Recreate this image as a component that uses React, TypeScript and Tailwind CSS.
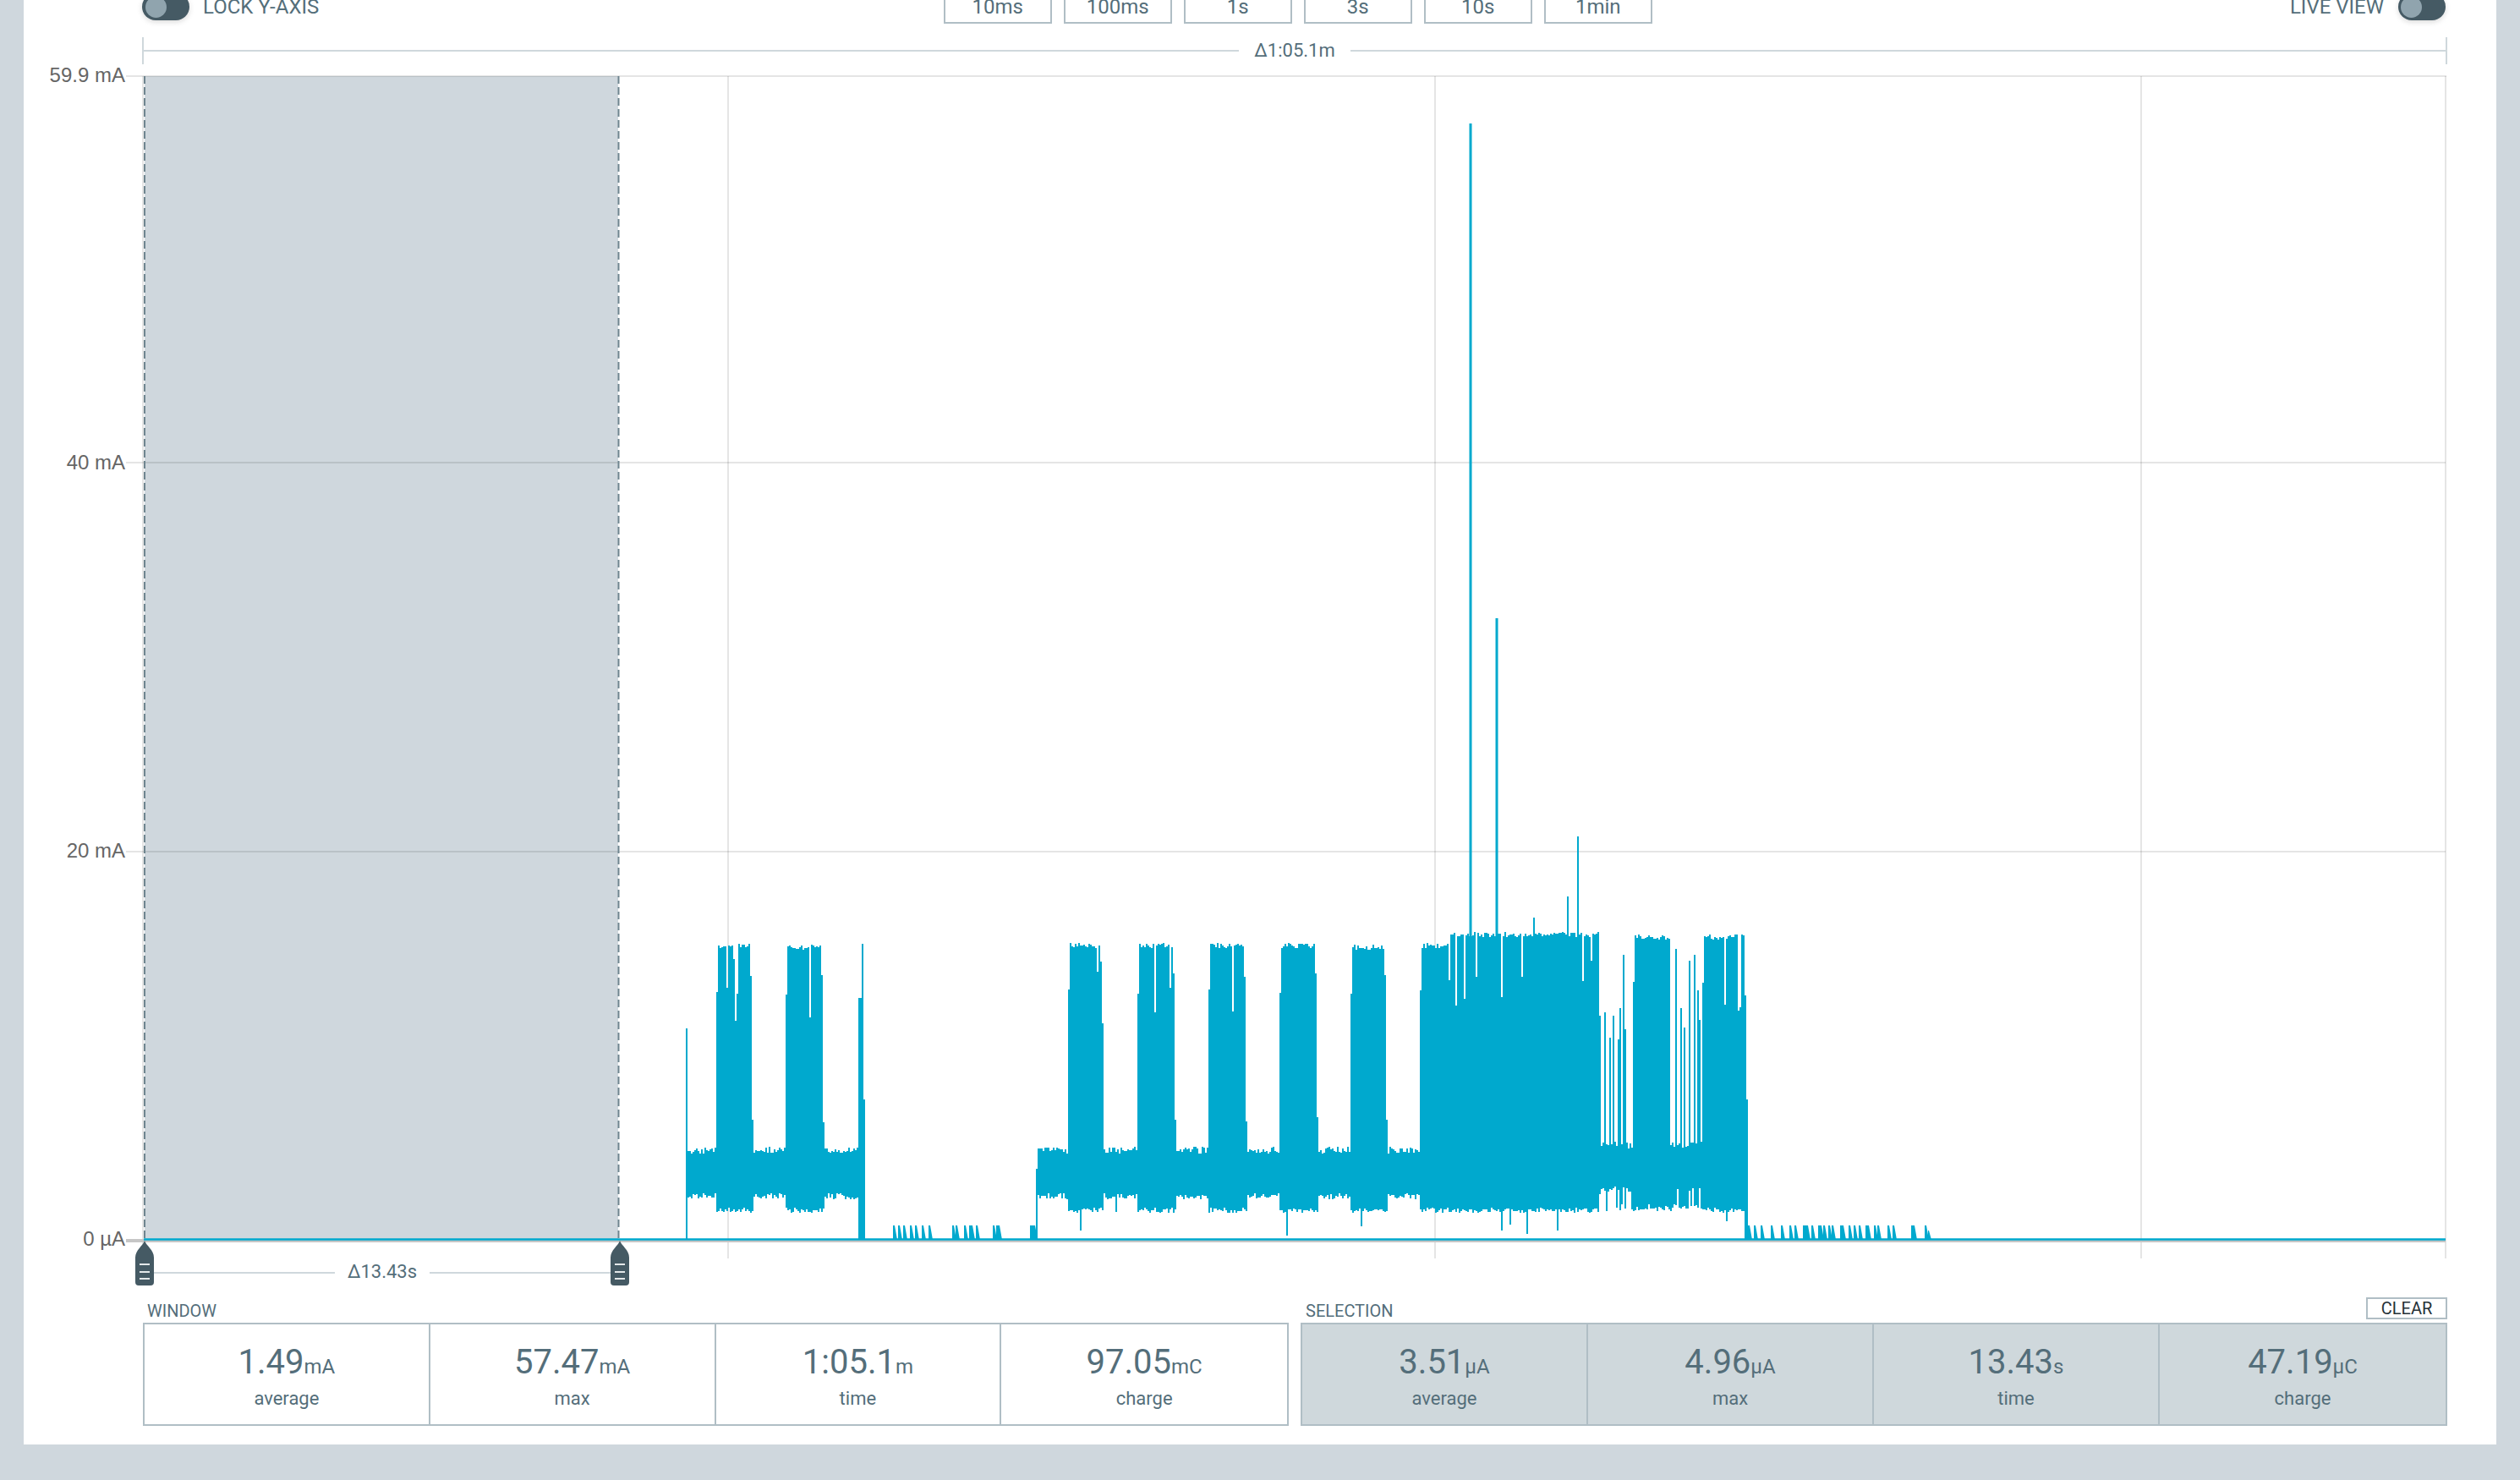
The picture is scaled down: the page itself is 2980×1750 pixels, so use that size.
const PLOT_L = 169
const PLOT_R = 2892
const PLOT_T = 90
const ZERO = 1466

// deterministic noise, so the trace is the same on every load
let seed = 7321
function rnd() {
  seed = (seed * 1664525 + 1013904223) % 4294967296
  return seed / 4294967296
}

const bursts: [number, number, number][] = [
  [847, 871, 1118], [871, 890, 1118], [929, 974, 1120],
  [1263, 1305, 1118], [1345, 1390, 1118], [1429, 1474, 1118],
  [1513, 1558, 1118], [1597, 1640, 1120],
  [1679, 1713, 1118], [1713, 1890, 1105],
  [1931, 1975, 1108], [2013, 2063, 1108],
]

const taper = [205, 90, 35, 18]

const topSpikes: Record<number, number> = {
  812: 1216, 1016: 1180, 1018: 1180, 1020: 1116,
  1226: 1382,
  1854: 1060, 1866: 989, 1814: 1085, 1892: 1201,
  1898: 1197, 1904: 1227, 1908: 1201, 1914: 1229, 1916: 1192, 1920: 1129, 1922: 1217,
  1982: 1122, 1988: 1192, 1992: 1215, 1998: 1136, 2004: 1129, 2008: 1171, 2010: 1206,
  2064: 1177,
}

const lowSpikes: Record<number, number> = {
  1278: 1455, 1320: 1433, 1522: 1461, 1610: 1450,
  1776: 1455, 1786: 1448, 1806: 1459, 1842: 1455, 2042: 1444,
}

function buildTrace() {
  let d = ""
  for (let x = 812; x <= 2066; x += 2) {
    if (x > 1022 && x < 1226) continue
    const late = x >= 1893
    let top = (late ? 1350 : 1356) + rnd() * 8
    let bot = (late ? 1402 : 1411) + rnd() * 7
    const b = bursts.find((k) => x >= k[0] && x <= k[1])
    if (b) {
      top = b[2] + rnd() * 6 - 3
      if (rnd() < 0.07) top += 25 + rnd() * 65
      if (x - b[0] < 2) top += 55
      if (b[1] < 1680 && b[1] - x < 4) top += taper[b[1] - x]
      bot = 1428 + rnd() * 6
    }
    if (x >= 1893 && x < 2013 && rnd() < 0.45) bot = 1424 + rnd() * 8
    if (topSpikes[x]) top = topSpikes[x]
    if (lowSpikes[x]) bot = lowSpikes[x]
    if (x === 812 || x === 1226 || x >= 2064 || (x >= 1016 && x <= 1022)) bot = ZERO
    if (x === 1022) top = 1300
    if (x === 2066) top = 1300
    d += `M${x} ${top.toFixed(0)}V${bot.toFixed(0)}`
  }
  return d
}

const ticks = [
  1056, 1062, 1068, 1076, 1082, 1090, 1098, 1126, 1130, 1140, 1146, 1148, 1154, 1174, 1178, 1180, 1218, 1220, 1222,
  2067, 2074, 2082, 2094, 2106, 2116, 2122, 2132, 2134, 2136, 2142, 2150, 2152, 2156, 2162, 2166, 2176, 2178, 2186,
  2192, 2198, 2206, 2208, 2216, 2220, 2232, 2238, 2260, 2262, 2276,
]

const tracePath = buildTrace()
const tickPath = ticks.map((x) => `M${x} 1466V1449h2l3 17Z`).join("") + "M2280 1466V1455h1l3 11Z"

function Handle({ x }: { x: number }) {
  return (
    <g transform={`translate(${x - 171} 0)`}>
      <path d="M171 1467C173 1473 182 1478 182 1487V1516Q182 1520 178 1520H164Q160 1520 160 1516V1487C160 1478 169 1473 171 1467Z" fill="#455a64" />
      <path d="M165 1495H177M165 1504H177M165 1512H177" stroke="#e4e8ea" strokeWidth="2" />
    </g>
  )
}

function Chart() {
  return (
    <svg viewBox="28 76 2924 1454" width="2924" height="1454" className="block [font-family:'Liberation_Sans',sans-serif]">
      <rect x="171" y={PLOT_T} width="560" height={ZERO - PLOT_T} fill="#cfd7dd" />
      <g stroke="#000" strokeOpacity="0.1" strokeWidth="2">
        <path d={`M149 ${PLOT_T}H${PLOT_R + 1}M149 547H${PLOT_R}M149 1007H${PLOT_R}`} />
        <path d={`M${PLOT_L} ${PLOT_T}V1488M861 ${PLOT_T}V1488M1697 ${PLOT_T}V1488M2532 ${PLOT_T}V1488M${PLOT_R} ${PLOT_T}V1488`} />
      </g>
      <path d={`M149 1467H${PLOT_R}`} stroke="#c6c6c6" strokeWidth="4" />
      <path d={`M171 ${PLOT_T}V1467M731.5 ${PLOT_T}V1467`} stroke="#6f858f" strokeWidth="2" strokeDasharray="9 4" />
      <path d={`M170 1465.5H${PLOT_R}`} stroke="#00a9ce" strokeWidth="2.5" />
      <path d={tracePath} stroke="#00a9ce" strokeWidth="2" fill="none" shapeRendering="crispEdges" />
      <path d="M1739 146V1110M1770 731V1110" stroke="#00a9ce" strokeWidth="3" />
      <path d={tickPath} fill="#00a9ce" />
      <g fontSize="24" fill="#666" textAnchor="end" dominantBaseline="middle">
        <text x="148" y={PLOT_T + 1}>59.9 mA</text>
        <text x="148" y="549">40 mA</text>
        <text x="148" y="1008">20 mA</text>
        <text x="148" y="1467">0 µA</text>
      </g>
      <path d="M182 1505H396M508 1505H722" stroke="#cfd8dc" strokeWidth="2" />
      <text x="452" y="1511" fontSize="22" fill="#546e7a" textAnchor="middle" className="[font-family:Roboto,sans-serif]">Δ13.43s</text>
      <Handle x={171} />
      <Handle x={733} />
    </svg>
  )
}

function Toggle({ knob }: { knob: string }) {
  return (
    <div className={`w-[56px] h-[32px] rounded-full bg-[#455a64] shadow-[0_2px_6px_rgba(0,0,0,0.15)] flex items-center ${knob}`}>
      <div className="w-[25px] h-[25px] rounded-full bg-[#90a4ae]" />
    </div>
  )
}

const ranges = ["10ms", "100ms", "1s", "3s", "10s", "1min"]

function Stat({ value, unit, label, last }: { value: string; unit: string; label: string; last: boolean }) {
  return (
    <div className={`flex flex-col items-center pt-[21px] ${last ? "" : "border-r-2 border-[#b0bec5]"}`}>
      <div className="flex items-baseline text-[#546e7a]">
        <span className="text-[40px] leading-[48px]">{value}</span>
        <span className="text-[24px] leading-[48px]">{unit}</span>
      </div>
      <div className="text-[22px] leading-[26px] mt-[1px] text-[#546e7a]">{label}</div>
    </div>
  )
}

type StatData = { value: string; unit: string; label: string }

const windowStats: StatData[] = [
  { value: "1.49", unit: "mA", label: "average" },
  { value: "57.47", unit: "mA", label: "max" },
  { value: "1:05.1", unit: "m", label: "time" },
  { value: "97.05", unit: "mC", label: "charge" },
]

const selectionStats: StatData[] = [
  { value: "3.51", unit: "µA", label: "average" },
  { value: "4.96", unit: "µA", label: "max" },
  { value: "13.43", unit: "s", label: "time" },
  { value: "47.19", unit: "µC", label: "charge" },
]

function StatGroup({ stats, shaded }: { stats: StatData[]; shaded: boolean }) {
  return (
    <div className={`h-[122px] border-2 border-[#b0bec5] grid grid-cols-4 ${shaded ? "bg-[#cfd8dc]" : "bg-white"}`}>
      {stats.map((s, i) => (
        <Stat key={s.label} {...s} last={i === 3} />
      ))}
    </div>
  )
}

export default function App() {
  return (
    <div className="w-[2980px] h-[1750px] bg-[#cfd7dd] overflow-hidden pl-[28px] [font-family:Roboto,sans-serif]">
      <div className="w-[2924px] h-[1720px] bg-white">
        <div className="-mt-[12px] h-[40px] flex items-center pl-[140px] pr-[60px] text-[24px] text-[#546e7a] relative">
          <div className="w-[948px] flex items-center gap-[16px]">
            <Toggle knob="pl-[4px]" />
            <span>LOCK Y-AXIS</span>
          </div>
          <div className="flex gap-[14.5px]">
            {ranges.map((r) => (
              <button key={r} className="w-[127.5px] h-[40px] border-2 border-[#b0bec5] text-[#546e7a]">
                {r}
              </button>
            ))}
          </div>
          <div className="ml-auto flex items-center gap-[17px]">
            <span>LIVE VIEW</span>
            <Toggle knob="pl-[3px]" />
          </div>
        </div>
        <div className="mt-[16px] ml-[140px] w-[2726px] h-[32px] border-x-2 border-[#cfd8dc] flex items-center">
          <div className="flex-1 h-[2px] bg-[#cfd8dc]" />
          <span className="px-[18px] text-[22px] leading-[28px] text-[#546e7a]">Δ1:05.1m</span>
          <div className="flex-1 h-[2px] bg-[#cfd8dc]" />
        </div>
        <Chart />
        <div className="flex gap-[14px] pl-[141px] pr-[58px]">
          <div className="w-[1355px]">
            <div className="h-[34px] pl-[5px] pt-[8px] text-[20px] leading-[24px] text-[#546e7a]">WINDOW</div>
            <StatGroup stats={windowStats} shaded={false} />
          </div>
          <div className="flex-1">
            <div className="h-[34px] pl-[6px] flex justify-between items-start">
              <span className="pt-[8px] text-[20px] leading-[24px] text-[#546e7a]">SELECTION</span>
              <button className="mt-[4px] w-[96px] h-[26px] border-2 border-[#b0bec5] text-[20px] leading-[20px] text-[#263238]">CLEAR</button>
            </div>
            <StatGroup stats={selectionStats} shaded={true} />
          </div>
        </div>
      </div>
    </div>
  )
}
